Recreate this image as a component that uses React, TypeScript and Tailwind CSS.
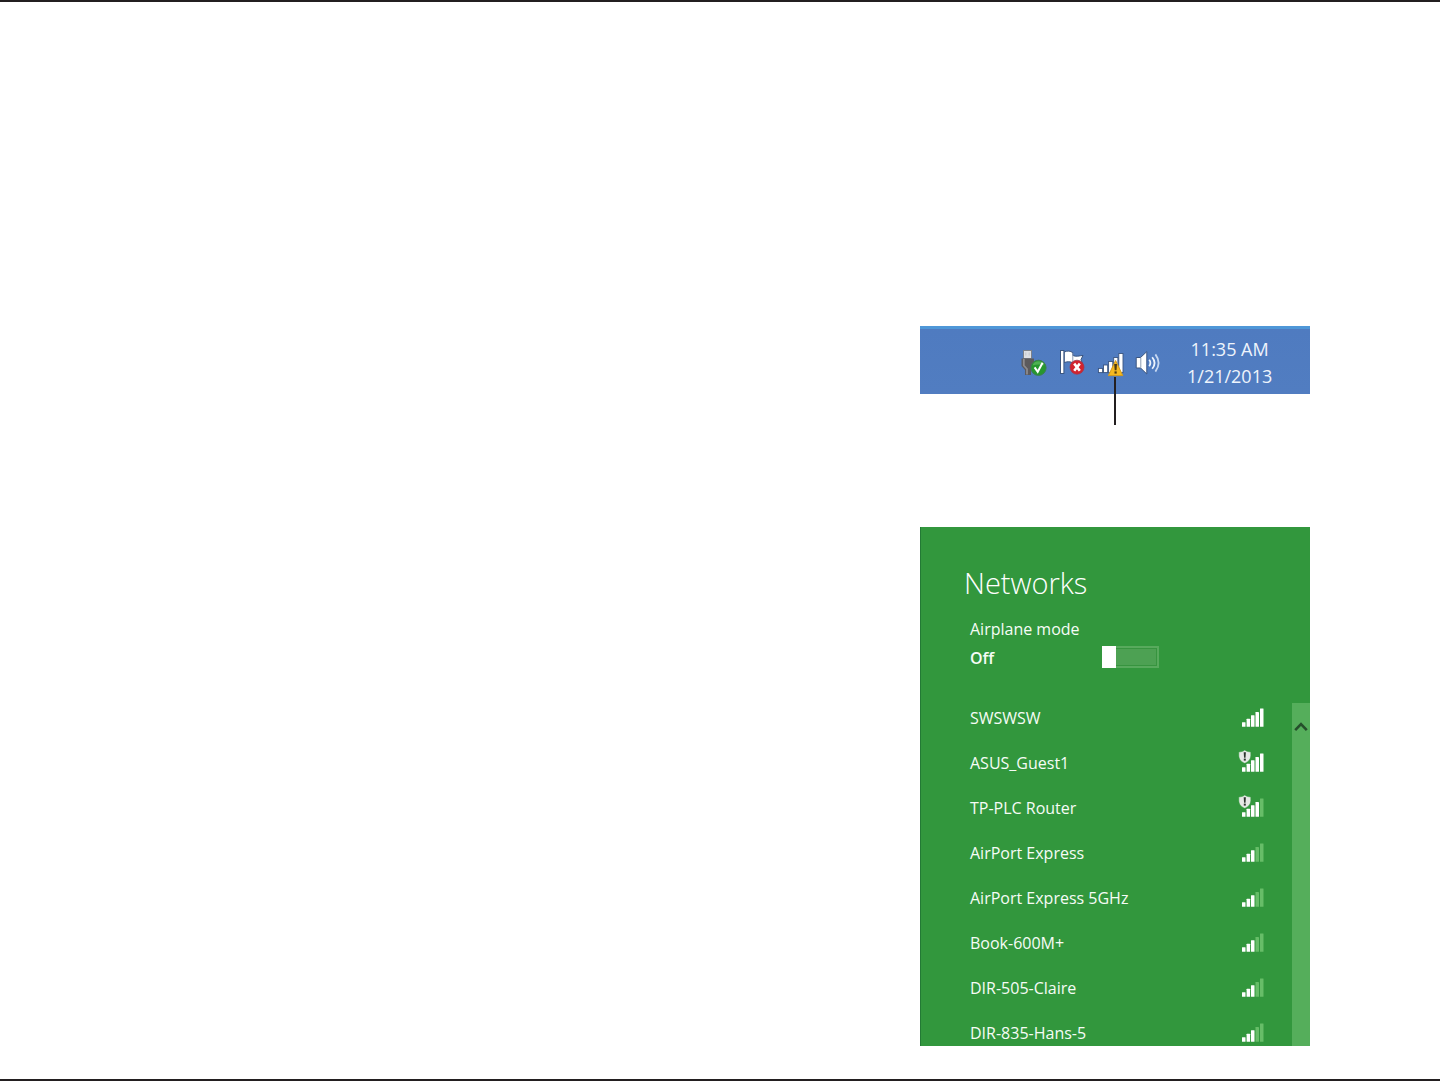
import { useState } from "react";

type Network = { name: string; bars: number; open?: boolean };

const networks: Network[] = [
  { name: "SWSWSW", bars: 5 },
  { name: "ASUS_Guest1", bars: 5, open: true },
  { name: "TP-PLC Router", bars: 4, open: true },
  { name: "AirPort Express", bars: 3 },
  { name: "AirPort Express 5GHz", bars: 3 },
  { name: "Book-600M+", bars: 3 },
  { name: "DIR-505-Claire", bars: 3 },
  { name: "DIR-835-Hans-5", bars: 3 },
];

const barShapes = [
  { x: 4, h: 4.6 },
  { x: 8.6, h: 8 },
  { x: 13, h: 11.6 },
  { x: 17.5, h: 14.8 },
  { x: 22, h: 18.4 },
];

function Signal({ bars, open }: { bars: number; open?: boolean }) {
  return (
    <svg width="26" height="24" viewBox="0 0 26 24" overflow="visible" aria-hidden="true">
      {barShapes.map((b, i) => (
        <rect key={b.x} x={b.x} y={20.8 - b.h} width="3.5" height={b.h} rx="0.4" fill={i < bars ? "#ffffff" : "#67bd68"} />
      ))}
      {open && (
        <g>
          <path
            d="M6.8 -1 C5 0.4 3 0.9 0.8 0.9 V4.5 C0.8 8.3 3.2 10.8 6.8 12.3 C10.4 10.8 12.8 8.3 12.8 4.5 V0.9 C10.6 0.9 8.6 0.4 6.8 -1Z"
            fill="#e6e8e6"
            stroke="#329a3d"
            strokeWidth="0.5"
          />
          <path d="M5.7 1.2 H7.9 L7.5 6.8 H6.1Z" fill="#2b332c" />
          <rect x="5.8" y="7.6" width="2" height="2" fill="#2b332c" />
        </g>
      )}
    </svg>
  );
}

function UsbIcon() {
  return (
    <svg width="28" height="28" viewBox="0 0 28 28" aria-hidden="true">
      <rect x="2.5" y="1.5" width="8" height="8" fill="#dddfe3" stroke="#7c818a" strokeWidth="1" />
      <path d="M4.8 3.5v3M8.2 3.5v3" stroke="#c3c6cb" strokeWidth="1" />
      <path d="M0.5 9.5 H13 V17 L10 20 V26 H4 V21 L0.5 17Z" fill="#5c5a5c" />
      <path d="M2.8 10v6.5l3.2 3.5V25.5" stroke="#8d8b8e" strokeWidth="1.8" fill="none" />
      <circle cx="17.5" cy="18.8" r="7.6" fill="#26972e" stroke="#3c7d54" strokeWidth="1" />
      <path d="M11.5 16.4a6.4 6.4 0 0 1 12 0c-4-1.5-8-1-12 0Z" fill="#4fb053" />
      <path d="M13.6 18.4l3.1 4.4L21.6 13.8" fill="none" stroke="#fff" strokeWidth="2" />
    </svg>
  );
}

function FlagIcon() {
  return (
    <svg width="28" height="28" viewBox="0 0 28 28" aria-hidden="true">
      <path d="M5.2 3c3.6-1.6 6-1 8.6.6v2.8c3.4 1.6 6.2.4 10.2 0L22 10.5l1.5 4.5c-4.5 1.5-7 .6-9.7-1.2-2.8-1.4-5.6-1.4-8.6-.2Z" fill="#fff" stroke="#3a5580" strokeWidth="1" />
      <rect x="1.5" y="1.5" width="3.4" height="23" fill="#fff" stroke="#3a5580" strokeWidth="1" />
      <path d="M13.8 4v9" stroke="#8a9bb4" strokeWidth="1" />
      <circle cx="18" cy="18.2" r="7" fill="#d3232e" stroke="#a03a52" strokeWidth="0.8" />
      <path d="M15.2 14.6l5.6 7.2M20.8 14.6l-5.6 7.2" stroke="#fff" strokeWidth="2.6" />
    </svg>
  );
}

function WarningSignalIcon() {
  return (
    <svg width="28" height="28" viewBox="0 0 28 28" aria-hidden="true">
      <g fill="#fff" stroke="#3a5580" strokeWidth="0.9">
        <rect x="1.4" y="19.4" width="4.2" height="4.2" />
        <rect x="6.5" y="16" width="4.2" height="7.6" />
        <rect x="11.6" y="12.5" width="4.2" height="11.1" />
        <rect x="16.7" y="8.5" width="4.2" height="15.1" />
        <rect x="21.8" y="4.5" width="4.2" height="19.1" />
      </g>
      <path d="M18.6 11.5L25.8 26.6H11.4Z" fill="#f5b921" stroke="#d39b1d" strokeWidth="1" strokeLinejoin="round" />
      <path d="M17.2 15h2.8l-.5 6.2h-1.8Z" fill="#4c3b14" />
      <rect x="17.5" y="22.4" width="2.2" height="2.2" fill="#4c3b14" />
    </svg>
  );
}

function SpeakerIcon() {
  return (
    <svg width="28" height="28" viewBox="0 0 28 28" aria-hidden="true">
      <path d="M1.2 8.5H5.6L11.8 2.6V25L5.6 19H1.2Z" fill="#fff" stroke="#3a5580" strokeWidth="1" />
      <path d="M5.8 9v9.6" stroke="#8e9db3" strokeWidth="1" />
      <g fill="none" stroke="#eef4fc" strokeWidth="1.8">
        <path d="M14.2 10.8q2.4 3 0 6.4" />
        <path d="M17.2 8.2q4.8 5.8 0 11.6" />
        <path d="M20.4 5.4q6.4 8.6 0 17.2" stroke="#c6d8f2" />
      </g>
    </svg>
  );
}

function Taskbar() {
  return (
    <section
      aria-label="Notification area"
      className="flex h-[68px] items-start border-t-[3px] border-[#4f97d8] bg-linear-to-b from-[#4f7bc0] to-[#517dc1] pl-[101px] text-[#eef4fc]"
    >
      <div className="flex gap-[10px] pt-5">
        <button aria-label="Safely remove hardware" className="size-7"><UsbIcon /></button>
        <button aria-label="Action center" className="size-7"><FlagIcon /></button>
        <div className="relative size-7">
          <button aria-label="Network" className="size-7"><WarningSignalIcon /></button>
          <span className="absolute top-7 left-[17px] h-12 w-0.5 bg-[#231f20]" />
        </div>
        <button aria-label="Volume" className="size-7"><SpeakerIcon /></button>
      </div>
      <div className="ml-6 flex flex-col pt-[7px] text-center text-lg leading-[27px]">
        <time>11:35 AM</time>
        <time>1/21/2013</time>
      </div>
    </section>
  );
}

function NetworksPanel() {
  const [airplane, setAirplane] = useState(false);
  return (
    <section className="mt-[133px] border-l border-[#237a35] bg-[#32973d] pt-9 text-base text-[#f6fcf6]">
      <h1 className="pl-[43px] text-[29px] leading-10 font-light text-white">Networks</h1>
      <div className="pt-[14px] pl-[49px]">
        <label htmlFor="airplane" className="block leading-6">Airplane mode</label>
        <div className="flex h-8 items-center">
          <span className="w-[132px] pt-0.5 text-base font-semibold">{airplane ? "On" : "Off"}</span>
          <input
            id="airplane"
            type="checkbox"
            role="switch"
            checked={airplane}
            onChange={(e) => setAirplane(e.target.checked)}
            className="flex h-[22px] w-[57px] appearance-none border-2 border-[#58aa5d] bg-[#4da153] shadow-[inset_0_0_0_1px_#37943f] before:-m-0.5 before:h-[22px] before:w-[14px] before:bg-white before:content-[''] checked:justify-end"
          />
        </div>
      </div>
      <div className="mt-[30px] flex">
        <ul className="flex grow flex-col gap-[21px] pt-[3px] pr-7 pb-px pl-[49px]">
          {networks.map((n) => (
            <li key={n.name}>
              <button className="flex h-6 w-full items-center justify-between text-left">
                <span>{n.name}</span>
                <Signal bars={n.bars} open={n.open} />
              </button>
            </li>
          ))}
        </ul>
        <div className="flex w-[18px] items-start justify-center bg-[#55ae5b] pt-[18px]">
          <button aria-label="Scroll up">
            <svg width="14" height="12" viewBox="0 0 14 12" aria-hidden="true">
              <path d="M1.2 9.2L7 3.2l5.8 6" fill="none" stroke="#254f2b" strokeWidth="2.6" />
            </svg>
          </button>
        </div>
      </div>
    </section>
  );
}

export default function App() {
  return (
    <main className="flex min-h-screen justify-end border-y-2 border-[#231f20] bg-white pt-[324px] pr-[130px] pb-[33px] font-['Open_Sans','Noto_Sans',sans-serif]">
      <div className="w-[390px]">
        <Taskbar />
        <NetworksPanel />
      </div>
    </main>
  );
}
